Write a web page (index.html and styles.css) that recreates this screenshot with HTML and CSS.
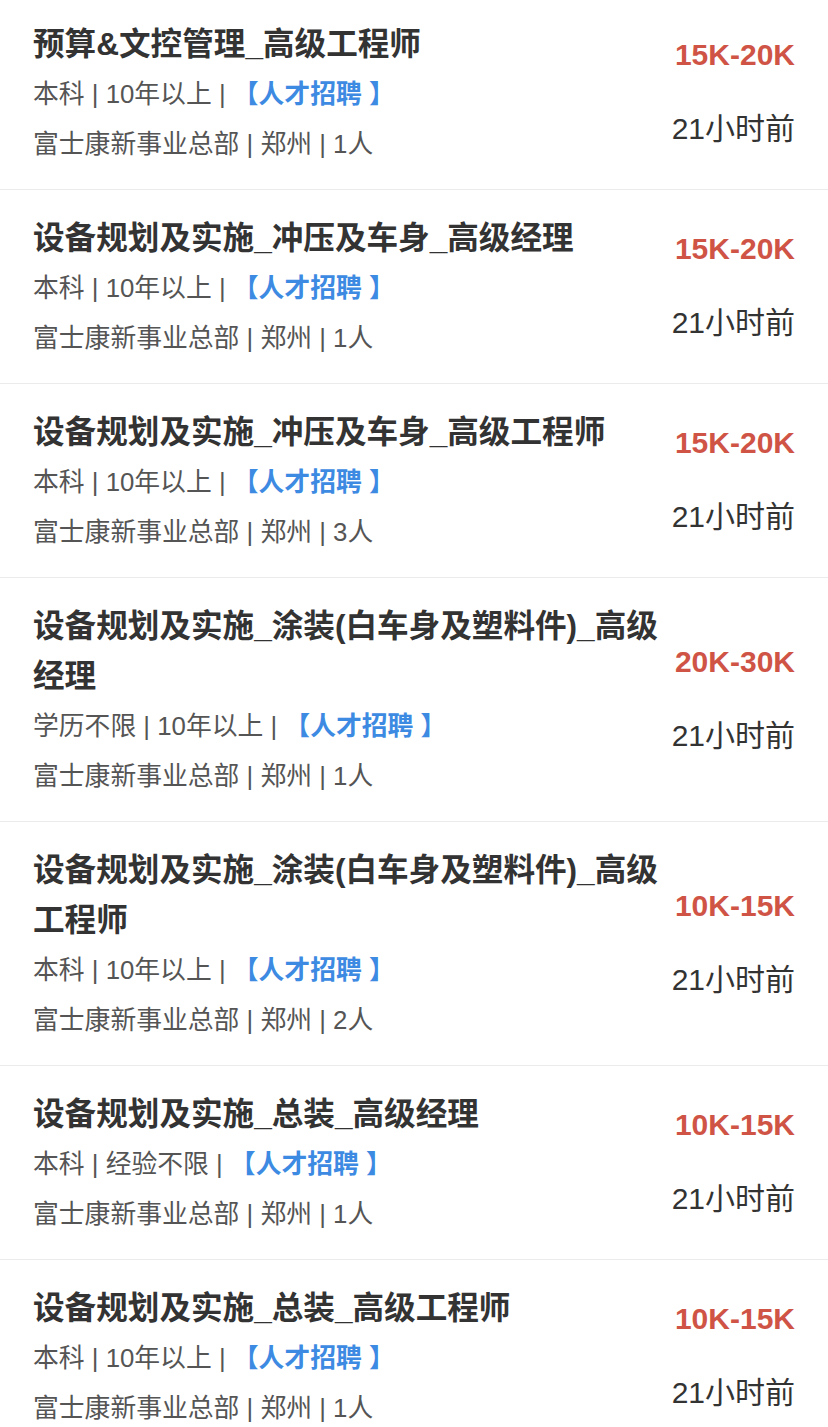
FILE: index.html
```html
<!DOCTYPE html>
<html lang="zh-CN">
<head>
<meta charset="utf-8">
<title>职位列表</title>
<link rel="stylesheet" href="styles.css">
</head>
<body>
<ul class="jobs">
  <li class="job">
    <div class="info">
      <div class="title">预算&amp;文控管理_高级工程师</div>
      <div class="meta">本科 | 10年以上 | <span class="tag">【人才招聘 】</span></div>
      <div class="meta">富士康新事业总部 | 郑州 | 1人</div>
    </div>
    <div class="side">
      <div class="salary">15K-20K</div>
      <div class="time">21小时前</div>
    </div>
  </li>
  <li class="job">
    <div class="info">
      <div class="title">设备规划及实施_冲压及车身_高级经理</div>
      <div class="meta">本科 | 10年以上 | <span class="tag">【人才招聘 】</span></div>
      <div class="meta">富士康新事业总部 | 郑州 | 1人</div>
    </div>
    <div class="side">
      <div class="salary">15K-20K</div>
      <div class="time">21小时前</div>
    </div>
  </li>
  <li class="job">
    <div class="info">
      <div class="title">设备规划及实施_冲压及车身_高级工程师</div>
      <div class="meta">本科 | 10年以上 | <span class="tag">【人才招聘 】</span></div>
      <div class="meta">富士康新事业总部 | 郑州 | 3人</div>
    </div>
    <div class="side">
      <div class="salary">15K-20K</div>
      <div class="time">21小时前</div>
    </div>
  </li>
  <li class="job">
    <div class="info">
      <div class="title">设备规划及实施_涂装(白车身及塑料件)_高级经理</div>
      <div class="meta">学历不限 | 10年以上 | <span class="tag">【人才招聘 】</span></div>
      <div class="meta">富士康新事业总部 | 郑州 | 1人</div>
    </div>
    <div class="side">
      <div class="salary">20K-30K</div>
      <div class="time">21小时前</div>
    </div>
  </li>
  <li class="job">
    <div class="info">
      <div class="title">设备规划及实施_涂装(白车身及塑料件)_高级工程师</div>
      <div class="meta">本科 | 10年以上 | <span class="tag">【人才招聘 】</span></div>
      <div class="meta">富士康新事业总部 | 郑州 | 2人</div>
    </div>
    <div class="side">
      <div class="salary">10K-15K</div>
      <div class="time">21小时前</div>
    </div>
  </li>
  <li class="job">
    <div class="info">
      <div class="title">设备规划及实施_总装_高级经理</div>
      <div class="meta">本科 | 经验不限 | <span class="tag">【人才招聘 】</span></div>
      <div class="meta">富士康新事业总部 | 郑州 | 1人</div>
    </div>
    <div class="side">
      <div class="salary">10K-15K</div>
      <div class="time">21小时前</div>
    </div>
  </li>
  <li class="job">
    <div class="info">
      <div class="title">设备规划及实施_总装_高级工程师</div>
      <div class="meta">本科 | 10年以上 | <span class="tag">【人才招聘 】</span></div>
      <div class="meta">富士康新事业总部 | 郑州 | 1人</div>
    </div>
    <div class="side">
      <div class="salary">10K-15K</div>
      <div class="time">21小时前</div>
    </div>
  </li>
</ul>
</body>
</html>
```
FILE: styles.css
```css
html, body {
  margin: 0;
  padding: 0;
  background: #fff;
}
body {
  font-family: "Liberation Sans", "Noto Sans CJK SC", sans-serif;
  color: #333;
  overflow: hidden;
}
.jobs {
  list-style: none;
  margin: 0;
  padding: 0;
}
.job {
  display: flex;
  align-items: stretch;
  padding: 23px 33px 20px 33px;
  border-bottom: 1px solid #ebebeb;
}
.job:first-child {
  padding-top: 19px;
}
.info {
  width: 636px;
  flex: none;
}
.title {
  font-size: 31.6px;
  font-weight: bold;
  line-height: 50px;
  color: #333;
}
.meta {
  font-size: 25.8px;
  line-height: 50px;
  color: #555;
}
.tag {
  color: #3d8ae3;
  font-weight: bold;
}
.side {
  flex: 1;
  display: flex;
  flex-direction: column;
  justify-content: center;
  align-items: flex-end;
  gap: 34px;
  padding-bottom: 4px;
}
.salary {
  font-size: 30px;
  font-weight: bold;
  line-height: 40px;
  color: #cf5446;
}
.time {
  font-size: 30px;
  line-height: 40px;
  color: #333;
}
```
